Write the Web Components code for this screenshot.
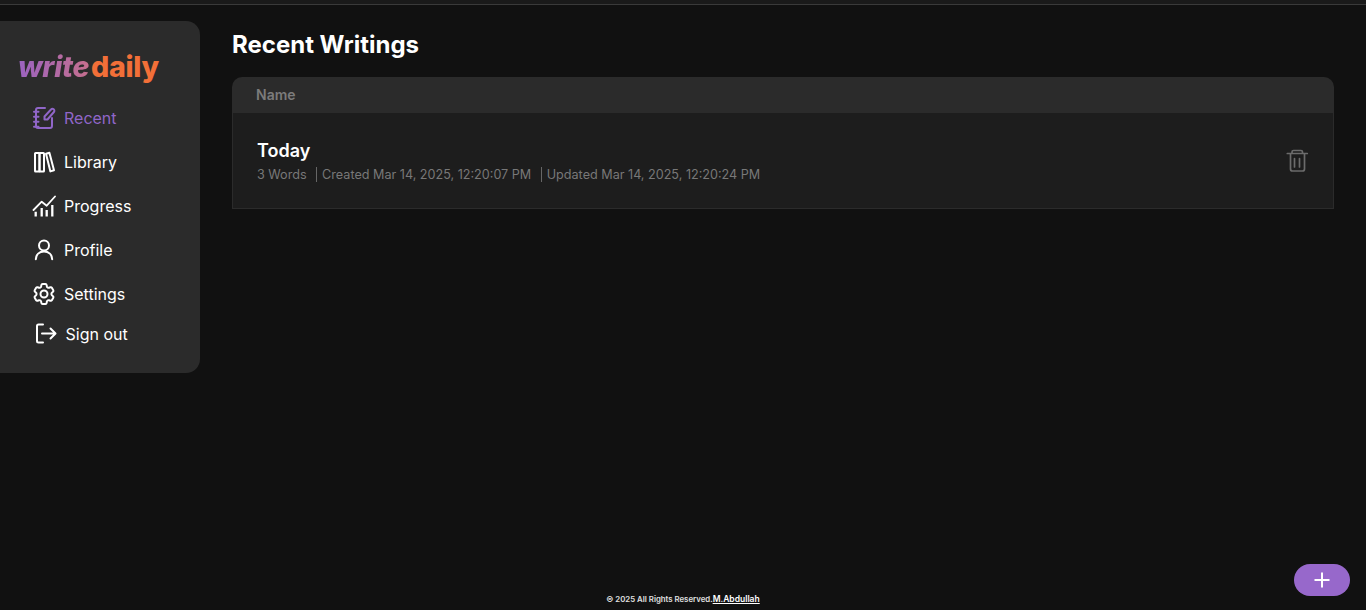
<!DOCTYPE html>
<html lang="en">
<head>
<meta charset="utf-8">
<title>writedaily</title>
<style>
  html, body { margin: 0; height: 100%; background: #111111; }
  body { font-family: Inter, "Liberation Sans", sans-serif; overflow: hidden; }
</style>
</head>
<body>
<app-shell>
  <side-bar slot="side">
    <nav-item label="Recent" icon="recent" active></nav-item>
    <nav-item label="Library" icon="library"></nav-item>
    <nav-item label="Progress" icon="progress"></nav-item>
    <nav-item label="Profile" icon="profile"></nav-item>
    <nav-item label="Settings" icon="settings"></nav-item>
    <nav-item label="Sign out" icon="signout" short></nav-item>
  </side-bar>
  <writing-list heading="Recent Writings">
    <writing-row title="Today" words="3 Words" created="Created Mar 14, 2025, 12:20:07 PM" updated="Updated Mar 14, 2025, 12:20:24 PM"></writing-row>
  </writing-list>
  <page-footer slot="footer"></page-footer>
  <add-button slot="fab"></add-button>
</app-shell>

<script>
  const ICONS = {
    recent: `<path d="M13 2H6a2 2 0 0 0-2 2v16a2 2 0 0 0 2 2h12a2 2 0 0 0 2-2v-8"/><path d="M2 5.700h4.500M2 10.700h4.500M2 15.700h4.500M2 20.700h4.500"/><path d="M12.500 13.500V10.500l6.500-7a1.900 1.900 0 0 1 2.900 2.500l-6.400 7.500z"/>`,
    library: `<rect x="3" y="3" width="4.500" height="18.500" rx=".6"/><rect x="7.500" y="3" width="4.500" height="18.500" rx=".6"/><path d="M14 3.800l3.400-1 4.600 17.500-3.600 1.100z"/>`,
    progress: `<path d="M1.500 16l8.200-8.300 5 4L23 2.500" stroke-width="1.800"/><path d="M3.700 22.500v-4.800M9.700 22.500v-8.500M14.700 22.500v-6.500M20.300 22.500V11" stroke-width="2.300" stroke-linecap="butt"/>`,
    profile: `<circle cx="12" cy="7.500" r="5"/><path d="M3.800 21.300c0-4.700 3.500-7.800 8.200-7.800s8.200 3.100 8.200 7.800"/>`,
    settings: `<g transform="translate(-1.200 -1.200) scale(1.100)"><path d="M9.594 3.940c.09-.542.56-.94 1.110-.94h2.593c.55 0 1.020.398 1.110.94l.213 1.281c.063.374.313.686.645.87.074.04.147.083.22.127.325.196.72.257 1.075.124l1.217-.456a1.125 1.125 0 0 1 1.370.49l1.296 2.247a1.125 1.125 0 0 1-.26 1.431l-1.003.827c-.293.241-.438.613-.43.992a7.723 7.723 0 0 1 0 .255c-.008.378.137.75.43.991l1.004.827c.424.35.534.955.26 1.430l-1.298 2.247a1.125 1.125 0 0 1-1.369.491l-1.217-.456c-.355-.133-.75-.072-1.076.124a6.470 6.470 0 0 1-.22.128c-.331.183-.581.495-.644.869l-.213 1.281c-.09.543-.56.94-1.110.94h-2.594c-.55 0-1.019-.398-1.110-.94l-.213-1.281c-.062-.374-.312-.686-.644-.87a6.520 6.520 0 0 1-.22-.127c-.325-.196-.72-.257-1.076-.124l-1.217.456a1.125 1.125 0 0 1-1.369-.49l-1.297-2.247a1.125 1.125 0 0 1 .26-1.431l1.004-.827c.292-.24.437-.613.43-.991a6.932 6.932 0 0 1 0-.255c.007-.38-.138-.751-.43-.992l-1.004-.827a1.125 1.125 0 0 1-.26-1.430l1.297-2.247a1.125 1.125 0 0 1 1.370-.491l1.216.456c.356.133.751.072 1.076-.124.072-.044.146-.086.22-.128.332-.183.582-.495.644-.869l.214-1.280Z" stroke-width="1.800"/><circle cx="12" cy="12" r="3.200" stroke-width="1.800"/></g>`,
    signout: `<path d="M9 2.500H4.500A1.500 1.500 0 0 0 3 4v15a1.500 1.500 0 0 0 1.500 1.500H9"/><path d="M8 11.500h13M16.500 6.500l5 5-5 5"/>`
  };

  class AppShell extends HTMLElement {
    constructor() {
      super();
      this.attachShadow({mode: 'open'}).innerHTML = `
        <style>
          :host { display: flex; flex-direction: column; height: 100vh; position: relative; box-sizing: border-box; }
          .topline { height: 5px; box-sizing: border-box; background: #1a1a1a; border-bottom: 1px solid #3a3a3a; flex: none; }
          .body { display: flex; flex: 1; min-height: 0; }
          .side { flex: none; padding-top: 16px; }
          .main { flex: 1; min-width: 0; padding: 0 32px; }
          .fab { position: absolute; right: 16px; bottom: 14px; }
        </style>
        <div class="topline"></div>
        <div class="body">
          <div class="side"><slot name="side"></slot></div>
          <div class="main"><slot></slot></div>
        </div>
        <slot name="footer"></slot>
        <div class="fab"><slot name="fab"></slot></div>`;
    }
  }

  class SideBar extends HTMLElement {
    constructor() {
      super();
      this.attachShadow({mode: 'open'}).innerHTML = `
        <style>
          :host { display: block; width: 200px; height: 352px; box-sizing: border-box; background: #2b2b2b; border-radius: 0 14px 14px 0; padding: 28px 0 0 19px; }
          .logo { margin-left: -1px; font-size: 28.600px; line-height: 36px; font-weight: 800; letter-spacing: -0.3px; display: flex; gap: 2px; }
          .write { font-style: italic; background: linear-gradient(90deg, #9b63c0, #c56f8e); -webkit-background-clip: text; background-clip: text; color: transparent; }
          .daily { color: #f26f38; }
          nav { margin-top: 11px; }
        </style>
        <div class="logo"><span class="write">write</span><span class="daily">daily</span></div>
        <nav><slot></slot></nav>`;
    }
  }

  class NavItem extends HTMLElement {
    connectedCallback() {
      if (this.shadowRoot) return;
      const active = this.hasAttribute('active');
      const short = this.hasAttribute('short');
      this.attachShadow({mode: 'open'}).innerHTML = `
        <style>
          :host { display: block; }
          a { display: flex; align-items: center; gap: ${short ? 7.5 : 8}px; height: ${short ? 36 : 44}px; padding-left: ${short ? 15 : 13}px; font-size: 16px; font-weight: 400; color: ${active ? '#9066c8' : '#ffffff'}; }
          svg { width: 24px; height: 24px; fill: none; stroke: currentColor; stroke-width: 2; stroke-linecap: round; stroke-linejoin: round; flex: none; }
        </style>
        <a><svg viewBox="0 0 24 24">${ICONS[this.getAttribute('icon')]}</svg><span>${this.getAttribute('label')}</span></a>`;
    }
  }

  class WritingList extends HTMLElement {
    connectedCallback() {
      if (this.shadowRoot) return;
      this.attachShadow({mode: 'open'}).innerHTML = `
        <style>
          :host { display: block; color: #fff; }
          h1 { margin: 0; padding-top: 24px; font-size: 24px; line-height: 32px; font-weight: 700; }
          .table { margin-top: 16px; border-radius: 10px 10px 0 0; overflow: hidden; }
          .head { height: 36px; line-height: 36px; background: #2b2b2b; padding-left: 24px; font-size: 14px; font-weight: 600; color: #7b7b7b; }
        </style>
        <h1>${this.getAttribute('heading')}</h1>
        <div class="table">
          <div class="head">Name</div>
          <slot></slot>
        </div>`;
    }
  }

  class WritingRow extends HTMLElement {
    connectedCallback() {
      if (this.shadowRoot) return;
      this.attachShadow({mode: 'open'}).innerHTML = `
        <style>
          :host { display: flex; align-items: center; justify-content: space-between; height: 96px; box-sizing: border-box; background: #1d1d1d; border: 1px solid #2b2b2b; border-top: 0; padding: 0 24px 0 24px; }
          h2 { margin: 0 0 2px; font-size: 18px; line-height: 26px; font-weight: 600; color: #fff; }
          .meta { display: flex; align-items: center; font-size: 12.62px; line-height: 18px; color: #787878; }
          .meta i { width: 1px; height: 15px; background: #666; margin: 0 5px 0 9.500px; }
          svg { width: 24px; height: 24px; fill: none; stroke: #6b6b6b; stroke-width: 1.700; stroke-linecap: round; stroke-linejoin: round; }
        </style>
        <div>
          <h2>${this.getAttribute('title')}</h2>
          <div class="meta"><span>${this.getAttribute('words')}</span><i></i><span>${this.getAttribute('created')}</span><i></i><span>${this.getAttribute('updated')}</span></div>
        </div>
        <svg viewBox="0 0 24 24"><path d="M2.300 4.500h20M7 4.500V3a1.500 1.500 0 0 1 1.500-1.500h7.500A1.500 1.500 0 0 1 17.500 3v1.500M5.500 4.500V20a2 2 0 0 0 2 2h10a2 2 0 0 0 2-2V4.500M9.500 9.500V18M14.500 9.500V18"/></svg>`;
    }
  }

  class PageFooter extends HTMLElement {
    constructor() {
      super();
      this.attachShadow({mode: 'open'}).innerHTML = `
        <style>
          :host { display: block; height: 24px; box-sizing: border-box; padding-top: 7px; text-align: center; font-size: 7.800px; line-height: 12px; font-weight: 600; color: #e0e0e0; }
          a { font-size: 8.500px; color: #fff; text-decoration: underline; }
        </style>
        © 2025 All Rights Reserved.<a>M.Abdullah</a>`;
    }
  }

  class AddButton extends HTMLElement {
    constructor() {
      super();
      this.attachShadow({mode: 'open'}).innerHTML = `
        <style>
          :host { display: flex; align-items: center; justify-content: center; width: 56px; height: 32px; border-radius: 16px; background: #9768cb; }
          svg { width: 18px; height: 18px; stroke: #fff; stroke-width: 2; fill: none; }
        </style>
        <svg viewBox="0 0 18 18"><path d="M9 1.500v15M1.500 9h15"/></svg>`;
    }
  }

  customElements.define('app-shell', AppShell);
  customElements.define('side-bar', SideBar);
  customElements.define('nav-item', NavItem);
  customElements.define('writing-list', WritingList);
  customElements.define('writing-row', WritingRow);
  customElements.define('page-footer', PageFooter);
  customElements.define('add-button', AddButton);
</script>
</body>
</html>
